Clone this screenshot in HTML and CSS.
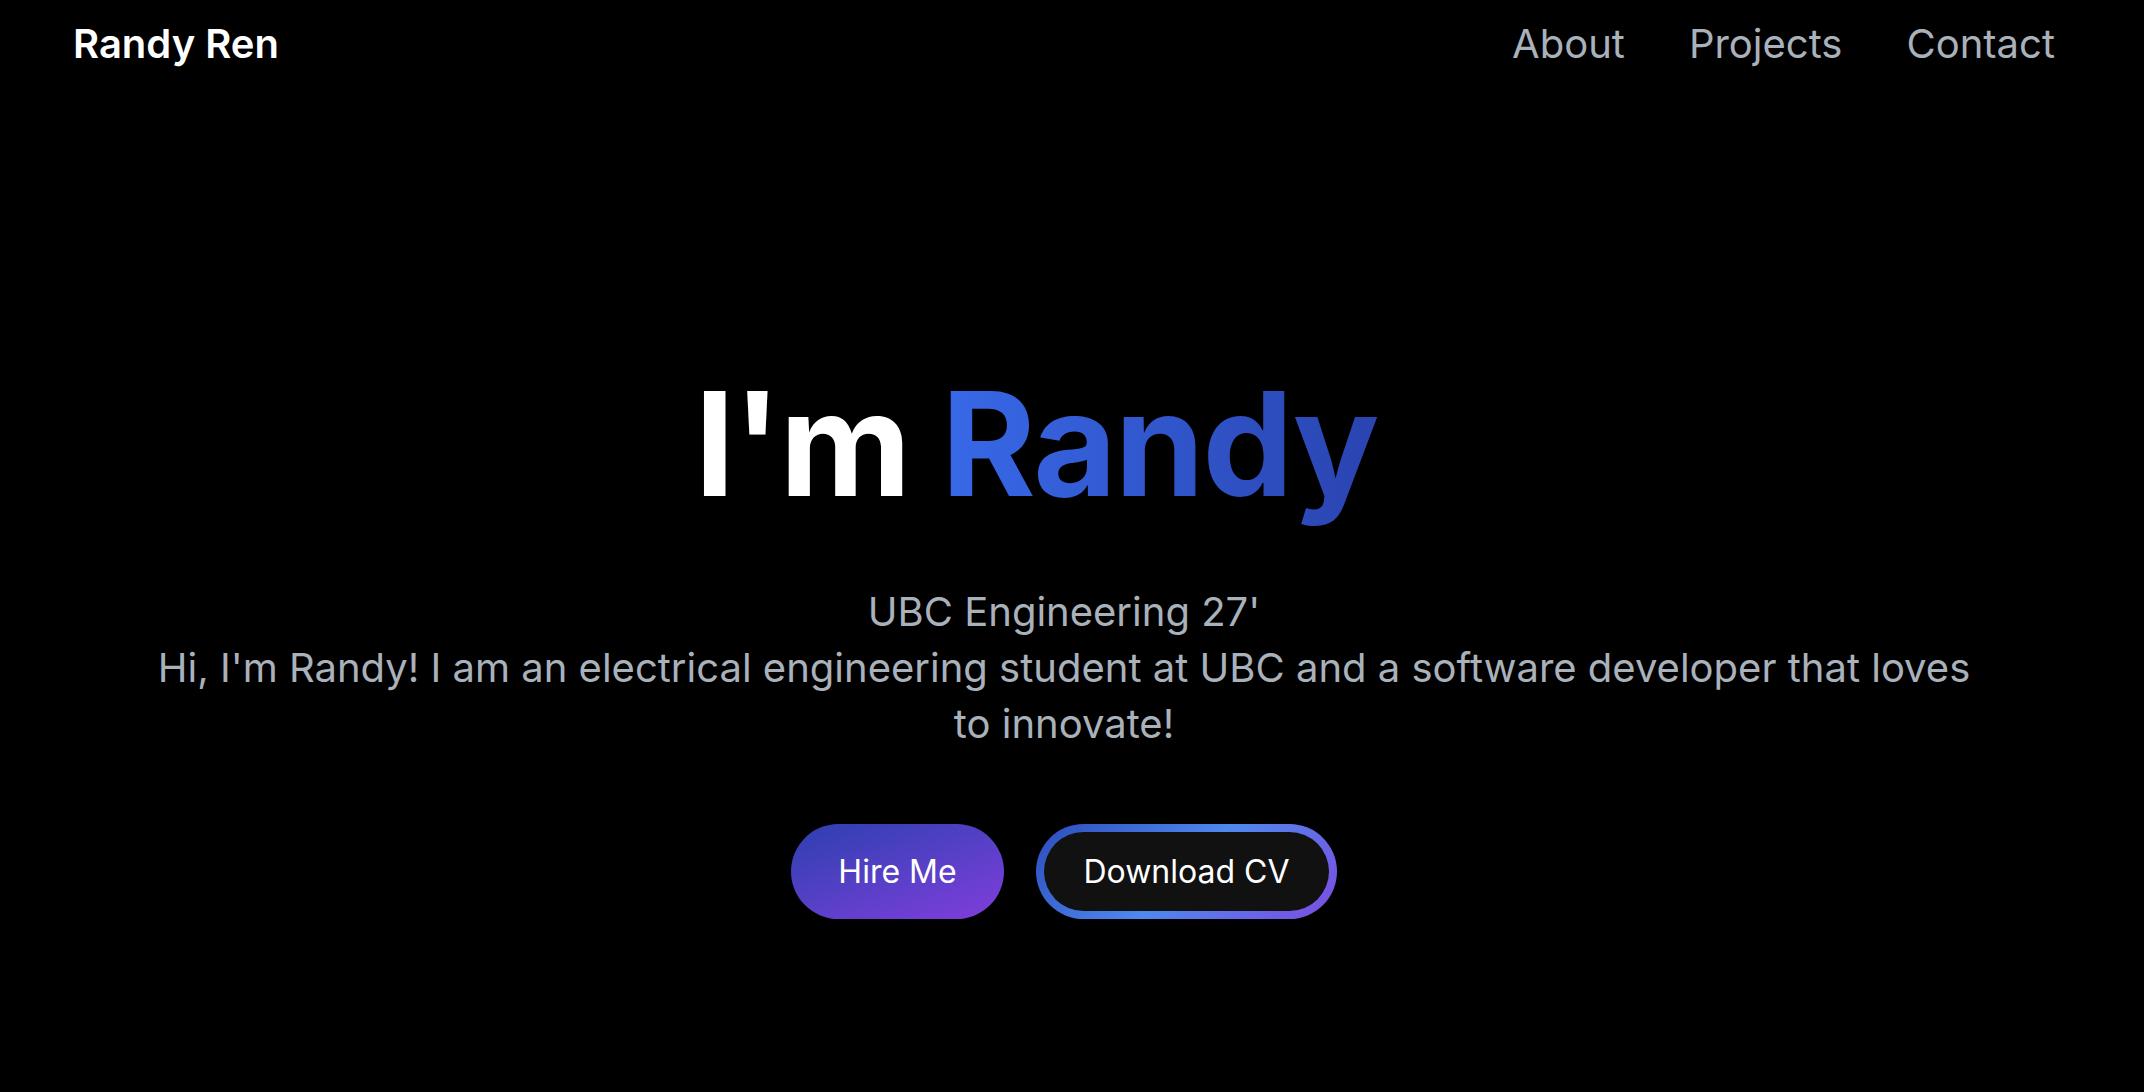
FILE: index.html
```html
<!DOCTYPE html>
<html lang="en">
<head>
<meta charset="utf-8">
<title>Randy Ren</title>
<link rel="stylesheet" href="styles.css">
</head>
<body>
<div class="page">
<header class="site-header">
  <a class="brand" href="#">Randy Ren</a>
  <nav class="nav">
    <a href="#about">About</a>
    <a href="#projects">Projects</a>
    <a href="#contact">Contact</a>
  </nav>
</header>
<main class="hero">
  <h1 class="hero-title">I'm <span class="accent">Randy</span><span class="cursor" aria-hidden="true"></span></h1>
  <p class="hero-text">UBC Engineering 27'<br>Hi, I'm Randy! I am an electrical engineering student at UBC and a software developer that loves to innovate!</p>
  <div class="actions">
    <a class="btn btn-primary" href="#contact">Hire Me</a>
    <a class="btn btn-outline" href="#">Download CV</a>
  </div>
</main>
</div>
</body>
</html>
```
FILE: styles.css
```css
html, body {
  margin: 0;
  padding: 0;
  background: #000;
  height: 100%;
}
body {
  font-family: Inter, "Noto Sans", sans-serif;
  color: #fff;
  overflow: hidden;
}
.page {
  width: calc(100% - 16px);
}
a {
  text-decoration: none;
  color: inherit;
}
.site-header {
  display: flex;
  justify-content: space-between;
  align-items: center;
  padding: 16px 73px 0 73px;
  line-height: 56px;
}
.brand {
  font-size: 40px;
  font-weight: 600;
  color: #fff;
}
.nav {
  display: flex;
  gap: 64px;
}
.nav a {
  font-size: 40px;
  font-weight: 400;
  color: #a9b1ba;
}
.hero {
  display: flex;
  flex-direction: column;
  align-items: center;
  text-align: center;
  padding-top: 300px;
}
.hero-title {
  margin: 0;
  font-size: 144px;
  line-height: 1;
  font-weight: 700;
  letter-spacing: -2px;
  color: #fff;
}
.accent {
  background: linear-gradient(90deg, #3869e8, #2a44b0);
  -webkit-background-clip: text;
  background-clip: text;
  color: transparent;
}
.cursor {
  display: inline-block;
  width: 56px;
  height: 1px;
}
.hero-text {
  margin: 68px 0 0;
  max-width: 1840px;
  font-size: 40px;
  line-height: 56px;
  color: #a9b1ba;
}
.actions {
  display: flex;
  gap: 32px;
  margin-top: 72px;
}
.btn {
  display: flex;
  align-items: center;
  justify-content: center;
  height: 95px;
  box-sizing: border-box;
  border-radius: 999px;
  font-size: 32px;
  color: #fff;
}
.btn-primary {
  width: 213px;
  background: linear-gradient(160deg, #2d3fb0 0%, #5640c6 50%, #813ddd 100%);
}
.btn-outline {
  width: 301px;
  border: 8px solid transparent;
  background:
    linear-gradient(#111, #111) padding-box,
    linear-gradient(135deg, #2c4cbd 0%, #4f88ee 50%, #7d4be0 100%) border-box;
}
```
